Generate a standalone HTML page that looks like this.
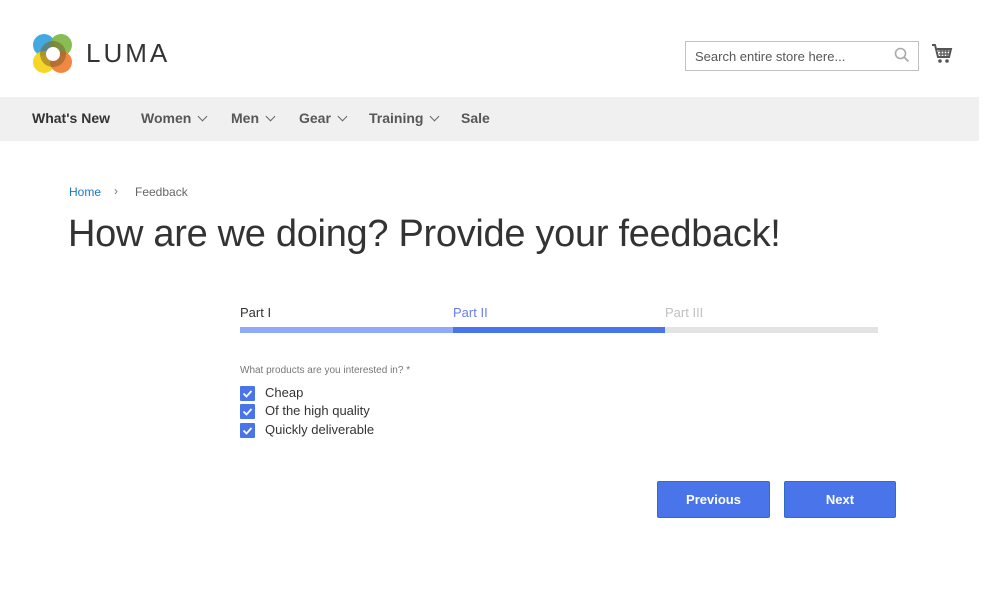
<!DOCTYPE html>
<html><head><meta charset="utf-8"><style>
*{margin:0;padding:0;box-sizing:border-box}
body{width:985px;height:611px;background:#fff;font-family:"Liberation Sans",sans-serif;color:#333;position:relative;overflow:hidden}
.abs{position:absolute}
.nav{left:0;top:97px;width:979px;height:44px;background:#f0f0f0}
.nav span{position:absolute;top:13px;font-size:14px;font-weight:bold;color:#575757}
.chev{display:inline-block;width:7px;height:7px;border-right:1.3px solid #666;border-bottom:1.3px solid #666;transform:rotate(45deg);margin-left:8px;position:relative;top:-3px}
.bar{top:327px;height:6px}
.cb{left:240px;width:15px;height:15px;background:#4a74ea;border-radius:1px}
.cb svg{display:block}
.lbl{left:265px;font-size:13px;color:#333}
.btn{top:481px;width:113px;height:37px;background:#4a74ea;border:1px solid #2d6ec6;border-radius:2px;color:#fff;font-weight:bold;font-size:13px;text-align:center;line-height:35px}
</style></head><body>
<svg class="abs" style="left:32px;top:33px" width="42" height="42" viewBox="0 0 42 42">
<circle cx="12" cy="12" r="11" fill="#2fa0da" opacity=".9"/>
<circle cx="29" cy="12" r="11" fill="#7ab640" opacity=".9"/>
<circle cx="12" cy="29" r="11" fill="#f5d10f" opacity=".9"/>
<circle cx="29" cy="29" r="11" fill="#ef7a2f" opacity=".9"/>
<circle cx="21" cy="21" r="13" fill="#7a5a2a" opacity=".5"/>
<circle cx="21" cy="21" r="7" fill="#fff"/>
</svg>
<div class="abs" style="left:86px;top:38px;font-size:26px;letter-spacing:3px;color:#333">LUMA</div>
<div class="abs" style="left:685px;top:41px;width:234px;height:30px;border:1px solid #c2c2c2;font-size:13px;color:#575757;padding:7px 9px">Search entire store here...</div>
<svg class="abs" style="left:894px;top:47px" width="16" height="16" viewBox="0 0 16 16"><circle cx="6.5" cy="6.5" r="5" fill="none" stroke="#aaa" stroke-width="1.6"/><path d="M10 10l4.5 4.5" stroke="#aaa" stroke-width="1.8"/></svg>
<svg class="abs" style="left:931px;top:43px" width="22" height="22" viewBox="0 0 22 22"><path d="M1 2h3l3 12h11l2-8H6" fill="none" stroke="#555" stroke-width="2"/><path d="M7 8h12M8 11h10M10 6v8M13 6v8M16 6v8" stroke="#555" stroke-width="1.3"/><circle cx="9" cy="18" r="1.8" fill="#555"/><circle cx="16" cy="18" r="1.8" fill="#555"/></svg>
<div class="abs nav">
<span style="left:32px;color:#333">What's New</span>
<span style="left:141px">Women<i class="chev"></i></span>
<span style="left:231px">Men<i class="chev"></i></span>
<span style="left:299px">Gear<i class="chev"></i></span>
<span style="left:369px">Training<i class="chev"></i></span>
<span style="left:461px">Sale</span>
</div>
<div class="abs" style="left:69px;top:185px;font-size:12px;color:#1979c3">Home</div>
<div class="abs" style="left:114px;top:184px;font-size:12px;color:#777">›</div>
<div class="abs" style="left:135px;top:185px;font-size:12px;color:#666">Feedback</div>
<div class="abs" style="left:68px;top:213px;font-size:38px;font-weight:300;color:#333;letter-spacing:-.3px">How are we doing? Provide your feedback!</div>
<div class="abs" style="left:240px;top:305px;font-size:13px;color:#333">Part I</div>
<div class="abs" style="left:453px;top:305px;font-size:13px;color:#6a7eea">Part II</div>
<div class="abs" style="left:665px;top:305px;font-size:13px;color:#c0c0c0">Part III</div>
<div class="abs bar" style="left:240px;width:213px;background:#8faaf6"></div>
<div class="abs bar" style="left:453px;width:212px;background:#4a74ea"></div>
<div class="abs bar" style="left:665px;width:213px;background:#e3e3e3"></div>
<div class="abs" style="left:240px;top:365px;font-size:10px;color:#777">What products are you interested in? *</div>
<div class="abs cb" style="top:386px"><svg width="15" height="15"><path d="M3.5 7.5l3 3 5-5.5" fill="none" stroke="#fff" stroke-width="1.8"/></svg></div>
<div class="abs cb" style="top:404px"><svg width="15" height="15"><path d="M3.5 7.5l3 3 5-5.5" fill="none" stroke="#fff" stroke-width="1.8"/></svg></div>
<div class="abs cb" style="top:423px"><svg width="15" height="15"><path d="M3.5 7.5l3 3 5-5.5" fill="none" stroke="#fff" stroke-width="1.8"/></svg></div>
<div class="abs lbl" style="top:385px">Cheap</div>
<div class="abs lbl" style="top:403px">Of the high quality</div>
<div class="abs lbl" style="top:422px">Quickly deliverable</div>
<div class="abs btn" style="left:657px">Previous</div>
<div class="abs btn" style="left:784px;width:112px">Next</div>
</body></html>
